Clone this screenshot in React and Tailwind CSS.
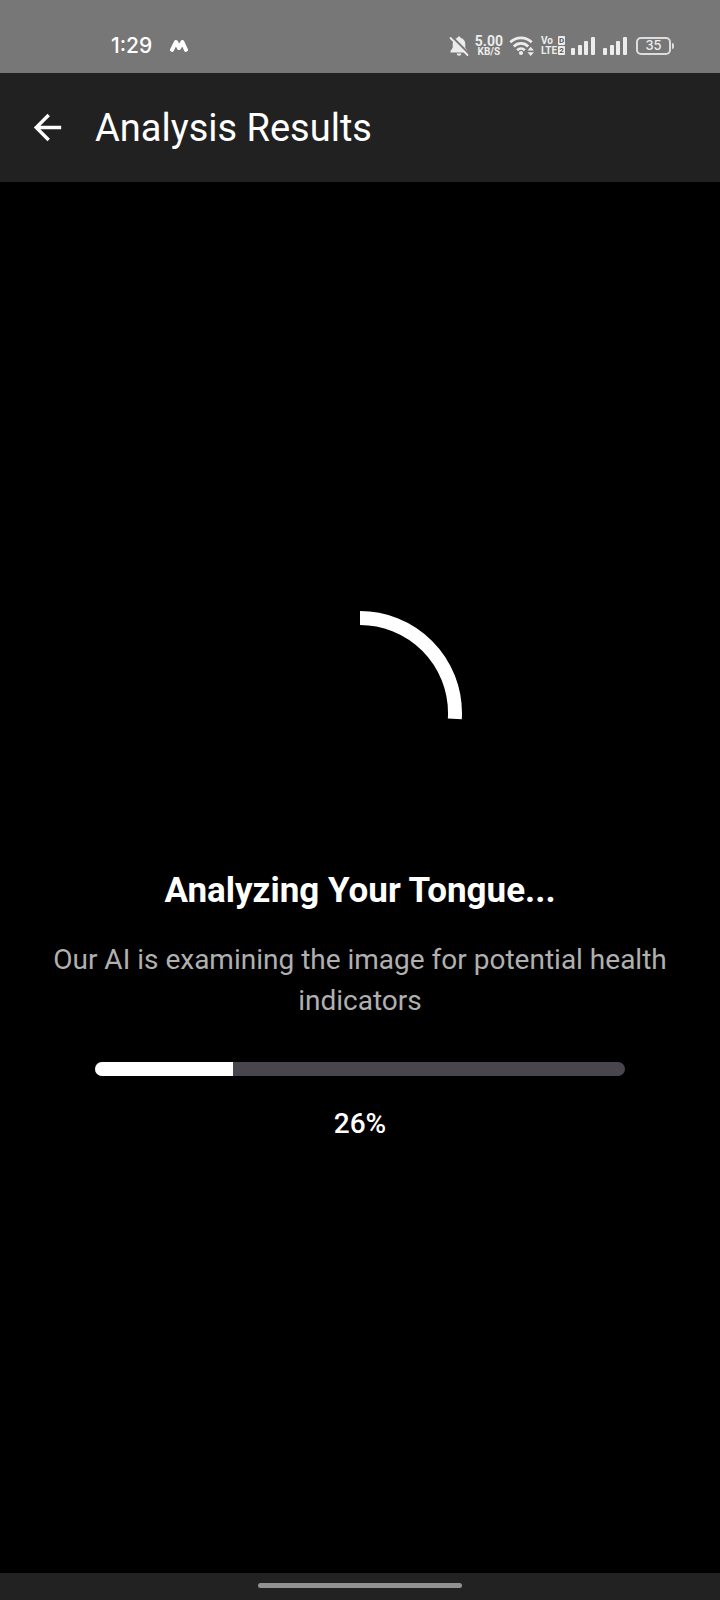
function MutedBell() {
  return (
    <svg viewBox="0 0 20 22" className="h-[22px] w-5" fill="#ececec" role="img" aria-label="Notifications muted">
      <path d="M10 1.500c1 0 1.700.7 1.700 1.600 3 .8 4.600 3 4.600 6v3.600l2.200 3.300v1.600H1.500v-1.600l2.200-3.300V9.100c0-3 1.600-5.200 4.600-6C8.300 2.200 9 1.500 10 1.500z" />
      <path d="M7.700 18.600h4.600a2.300 2.200 0 0 1-4.600 0z" />
      <path d="M3 1.700L19.500 18.300" stroke="#777777" strokeWidth="2.200" />
      <path d="M1.500 3L18.500 20" stroke="#ececec" strokeWidth="1.800" strokeLinecap="round" />
    </svg>
  );
}

function Wifi() {
  return (
    <svg viewBox="0 0 26 22" className="h-[22px] w-[26px]" fill="none" stroke="#ececec" strokeWidth="2.800" role="img" aria-label="Wi-Fi">
      <path d="M1.300 7.300a15.200 15.200 0 0 1 21.400 0M4.800 11.400a10.200 10.200 0 0 1 14.400 0M8.200 15.200a5.500 5.500 0 0 1 7.600 0" />
      <circle cx="12" cy="18" r="2.100" fill="#ececec" stroke="none" />
      <path d="M18.500 15.500l3.200-3.800 3.200 3.800zM18.500 17.300l3.200 3.800 3.200-3.800z" fill="#ececec" stroke="none" />
    </svg>
  );
}

function Signal() {
  return (
    <svg viewBox="0 0 24 18" className="h-[18px] w-6" fill="#ececec" role="img" aria-label="Signal strength">
      <rect x="0" y="11" width="4" height="7" rx="1" />
      <rect x="7" y="8" width="4" height="10" rx="1" />
      <rect x="13" y="4" width="4" height="14" rx="1" />
      <rect x="20" y="0" width="4" height="18" rx="1" />
    </svg>
  );
}

function StatusBar() {
  return (
    <div className="flex h-[73px] items-center bg-[#777777] pt-[18px] pr-[46px] pl-[111px] text-[#ececec]">
      <span className="font-[Inter,sans-serif] text-[21px] leading-6 font-medium text-white">1:29</span>
      <svg viewBox="0 0 18 13" className="ml-[18px] h-[13px] w-[18px]" fill="none" stroke="#ffffff" strokeWidth="4" strokeLinecap="round" strokeLinejoin="round" aria-hidden="true">
        <path d="M2 10.800L6 3L9 9L12.400 3L16 10.800" />
      </svg>
      <div className="ml-auto flex items-center gap-[6px]">
        <MutedBell />
        <div className="flex flex-col items-center font-[Roboto,sans-serif] font-bold">
          <span className="text-[14px] leading-[12px]">5.00</span>
          <span className="text-[10px] leading-[10px]">KB/S</span>
        </div>
        <Wifi />
        <div className="flex w-6 flex-col gap-px font-[Roboto,sans-serif] text-[10px] leading-[9px] font-bold">
          <div className="flex justify-between">
            <span>Vo</span>
            <span className="w-[7px] rounded-[1px] bg-[#ececec] text-center text-[8px] text-[#555555]">D</span>
          </div>
          <div className="flex justify-between">
            <span>LTE</span>
            <span className="w-[7px] rounded-[1px] bg-[#ececec] text-center text-[8px] text-[#555555]">2</span>
          </div>
        </div>
        <div className="flex gap-2">
          <Signal />
          <Signal />
        </div>
        <div className="ml-[3px] flex items-center gap-px">
          <span className="flex h-[18px] w-[35px] items-center justify-center rounded-[5px] border-2 border-[#dddddd] font-[Inter,sans-serif] text-[13px] font-medium">35</span>
          <span className="h-[6px] w-[2px] rounded-r-full bg-[#dddddd]" />
        </div>
      </div>
    </div>
  );
}

function Spinner({ value }) {
  return (
    <svg viewBox="0 0 204 204" className="size-[204px] -rotate-90" role="img" aria-label="Analysis in progress">
      <circle cx="102" cy="102" r="95" fill="none" stroke="#ffffff" strokeWidth="14" pathLength="100" strokeDasharray={`${value} 100`} />
    </svg>
  );
}

export default function App() {
  const progress = 26;
  return (
    <div className="flex min-h-screen flex-col bg-black font-[Roboto,sans-serif] text-white">
      <StatusBar />
      <header className="flex h-[109px] items-center bg-[#212121] pl-[27px]">
        <button type="button" aria-label="Go back" className="mr-[27px] size-[41px]">
          <svg viewBox="0 0 24 24" className="size-full" fill="#ffffff" aria-hidden="true">
            <path d="M20 11H7.830l5.590-5.590L12 4l-8 8 8 8 1.410-1.410L7.830 13H20v-2z" />
          </svg>
        </button>
        <h1 className="text-[38px] leading-[48px]">Analysis Results</h1>
      </header>
      <main className="flex flex-1 flex-col items-center justify-center px-10 text-center">
        <Spinner value={progress} />
        <h2 className="mt-[55px] text-[35px] leading-[41px] font-bold">Analyzing Your Tongue...</h2>
        <p className="mt-7 text-[28px] leading-[41px] text-[#b0b0b0]">Our AI is examining the image for potential health indicators</p>
        <div className="mt-[41px] w-full px-[55px]">
          <div
            role="progressbar"
            aria-label="Analysis progress"
            aria-valuenow={progress}
            aria-valuemin={0}
            aria-valuemax={100}
            className="h-[14px] overflow-hidden rounded-full bg-[#49454f]"
          >
            <div className="h-full bg-white" style={{ width: `${progress}%` }} />
          </div>
        </div>
        <p className="mt-[27px] text-[28px] leading-[41px] font-medium">{progress}%</p>
      </main>
      <footer className="flex h-[27px] justify-center bg-[#222222] pt-[10px]">
        <div className="h-[5px] w-[204px] rounded-full bg-[#929292]" />
      </footer>
    </div>
  );
}
